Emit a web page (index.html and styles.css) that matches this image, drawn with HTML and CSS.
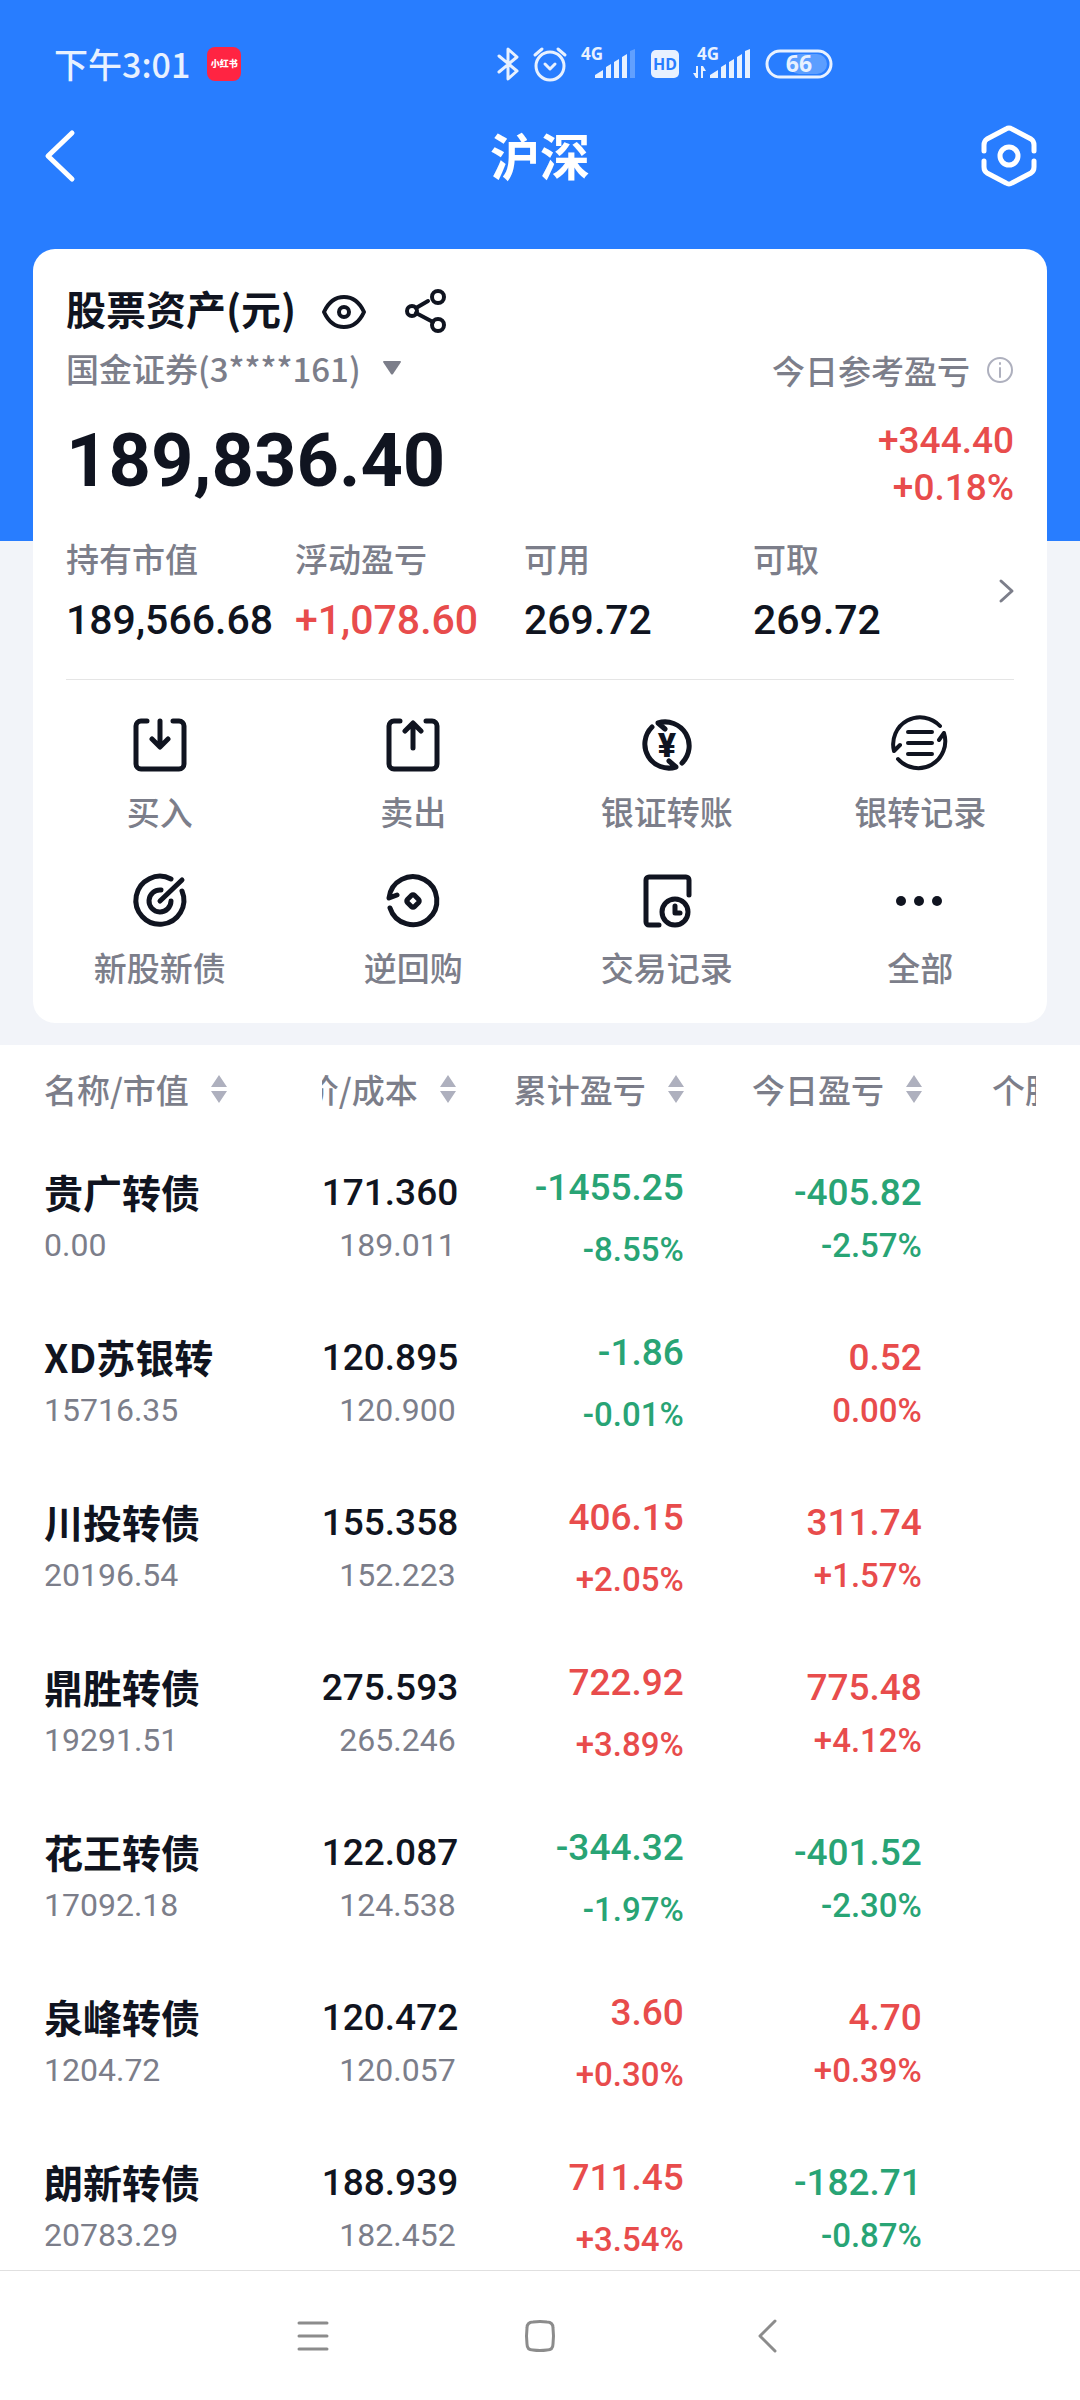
FILE: index.html
```html
<!DOCTYPE html>
<html lang="zh-CN">
<head>
    <meta charset="UTF-8">
    <meta name="viewport" content="width=device-width, initial-scale=1.0">
    <title>沪深</title>
    <link rel="stylesheet" href="styles.css">
</head>
<body>
    <div class="top">
        <div class="status-bar">
            <div class="status-left">
                <span>下午3:01</span>
                <span class="app-badge">小红书</span>
            </div>
            <div class="status-icons">
                <svg class="bluetooth" width="22" height="34" viewBox="0 0 22 34"><path d="M2 9l18 15-9 8V2l9 8L2 25"/></svg>
                <svg class="alarm" width="34" height="34" viewBox="0 0 34 34"><circle cx="17" cy="19" r="14"/><path d="M2 8l7-6M32 8l-7-6M12 17l5 5 5-5"/></svg>
                <svg class="signal" width="56" height="34" viewBox="0 0 56 34">
                    <text x="0" y="13">4G</text>
                    <path d="M14 31v-3l8-5v8zM25 31V20l5-3v14zM33 31V15l5-3v19zM41 31V10l5-3v24z"/>
                    <path class="dim" d="M49 31V4l5-2v29z"/>
                </svg>
                <svg class="hd" width="28" height="28" viewBox="0 0 28 28"><rect width="28" height="28" rx="5"/><text x="14" y="20">HD</text></svg>
                <svg class="signal" width="58" height="34" viewBox="0 0 58 34">
                    <text x="4" y="13">4G</text>
                    <path d="M3 19h2v12H3l-3-5h3zM8 31V19h2l3 5h-3v7z"/>
                    <path d="M17 31v-3l8-5v8zM28 31V20l5-3v14zM36 31V15l5-3v19zM44 31V10l5-3v24zM52 31V4l5-2v29z"/>
                </svg>
                <svg class="battery" width="68" height="30" viewBox="0 0 68 30"><rect class="level" x="24" y="5" width="38" height="20" rx="10"/><rect class="shell" x="2" y="2" width="64" height="26" rx="13"/><text x="34" y="23">66</text></svg>
            </div>
        </div>

        <header class="title-bar">
            <button type="button" aria-label="返回">
                <svg width="32" height="52" viewBox="0 0 32 52"><path d="M29 3L5 26l24 23"/></svg>
            </button>
            <h1>沪深</h1>
            <button type="button" aria-label="设置">
                <svg width="56" height="62" viewBox="0 0 56 62"><path d="M3 26v-6q0-4 3-6L25 4q3-2 6 0l19 10q3 2 3 6v6M3 36v6q0 4 3 6l19 10q3 2 6 0l19-10q3-2 3-6v-6"/><circle cx="28" cy="31" r="9"/></svg>
            </button>
        </header>

        <section class="card">
            <div class="card-title">
                <h2>股票资产(元)</h2>
                <button type="button" aria-label="隐藏金额">
                    <svg width="44" height="44" viewBox="0 0 44 44"><path d="M2 24C7 13 15 9 22 9s15 4 20 15c-5 11-13 15-20 15S7 35 2 24z"/><circle cx="22" cy="24" r="5"/></svg>
                </button>
                <button type="button" aria-label="分享">
                    <svg width="44" height="46" viewBox="0 0 44 46"><circle cx="34" cy="10" r="6"/><circle cx="8" cy="24" r="5"/><circle cx="34" cy="38" r="6"/><path d="M12 21l12-7M12 26l17 9"/></svg>
                </button>
            </div>

            <div class="account">
                <button type="button">国金证券(3****161)
                    <svg width="18" height="14" viewBox="0 0 18 14"><path d="M1 0h16q1 0 1 1l-8 12q-1 1-2 0L0 1q0-1 1-1z"/></svg>
                </button>
                <span class="today">今日参考盈亏
                    <svg width="28" height="28" viewBox="0 0 28 28"><circle cx="14" cy="14" r="12"/><path d="M14 12v9M14 7v1"/></svg>
                </span>
            </div>

            <div class="amount">
                <strong>189,836.40</strong>
                <div class="amount-change up">
                    <span>+344.40</span>
                    <span>+0.18%</span>
                </div>
            </div>

            <a class="metrics" href="#assets">
                <span class="metric"><span>持有市值</span><b>189,566.68</b></span>
                <span class="metric"><span>浮动盈亏</span><b class="up">+1,078.60</b></span>
                <span class="metric"><span>可用</span><b>269.72</b></span>
                <span class="metric"><span>可取</span><b>269.72</b></span>
                <svg width="16" height="24" viewBox="0 0 16 24"><path d="M3 2l11 10L3 22"/></svg>
            </a>

            <nav class="actions">
                <a href="#buy">
                    <svg width="54" height="56" viewBox="0 0 54 54"><path d="M14 3H8a5 5 0 0 0-5 5v38a5 5 0 0 0 5 5h38a5 5 0 0 0 5-5V8a5 5 0 0 0-5-5h-6M27 3v25M19 21l8 8 8-8"/></svg>
                    买入
                </a>
                <a href="#sell">
                    <svg width="54" height="56" viewBox="0 0 54 54"><path d="M14 3H8a5 5 0 0 0-5 5v38a5 5 0 0 0 5 5h38a5 5 0 0 0 5-5V8a5 5 0 0 0-5-5h-6M27 30V6M19 13l8-8 8 8"/></svg>
                    卖出
                </a>
                <a href="#transfer">
                    <svg width="54" height="56" viewBox="0 0 54 54"><path d="M12 9A24 24 0 0 0 36 49l-7-6M42 45A24 24 0 0 0 18 5l7 6"/><text x="27" y="39">¥</text></svg>
                    银证转账
                </a>
                <a href="#transfer-log">
                    <svg class="thin" width="60" height="60" viewBox="0 0 60 60"><path d="M50 13A27 27 0 0 0 4 38l6-6M8 46a27 27 0 0 0 46-26l-5 7M18 19h24M18 30h24M18 41h24"/></svg>
                    银转记录
                </a>
                <a href="#ipo">
                    <svg width="54" height="56" viewBox="0 0 54 54"><path d="M38 5A24 24 0 1 0 49 17M28 16a11 11 0 1 0 10 11M27 27L49 6"/></svg>
                    新股新债
                </a>
                <a href="#repo">
                    <svg width="54" height="56" viewBox="0 0 54 54"><path d="M11 21l-8 3A24 24 0 1 1 4 34"/><rect x="22" y="22" width="10" height="10" rx="2" transform="rotate(45 27 27)"/></svg>
                    逆回购
                </a>
                <a href="#trades">
                    <svg width="54" height="56" viewBox="0 0 54 54"><path d="M19 51H9a3 3 0 0 1-3-3V6a3 3 0 0 1 3-3h37a3 3 0 0 1 3 3v15"/><circle cx="35" cy="38" r="13"/><path d="M35 32v7h5"/></svg>
                    交易记录
                </a>
                <a href="#all">
                    <svg class="dots" width="54" height="56" viewBox="0 0 54 54"><circle cx="8" cy="27" r="5"/><circle cx="26" cy="27" r="5"/><circle cx="44" cy="27" r="5"/></svg>
                    全部
                </a>
            </nav>
        </section>
    </div>

    <main class="holdings">
        <table>
            <thead>
                <tr>
                    <th class="col-name"><button type="button">名称/市值 <svg width="16" height="28" viewBox="0 0 16 28"><path d="M8 0l8 12H0zM0 16h16L8 28z"/></svg></button></th>
                    <th class="col-price"><button type="button">现价/成本 <svg width="16" height="28" viewBox="0 0 16 28"><path d="M8 0l8 12H0zM0 16h16L8 28z"/></svg></button></th>
                    <th class="col-total"><button type="button">累计盈亏 <svg width="16" height="28" viewBox="0 0 16 28"><path d="M8 0l8 12H0zM0 16h16L8 28z"/></svg></button></th>
                    <th class="col-today"><button type="button">今日盈亏 <svg width="16" height="28" viewBox="0 0 16 28"><path d="M8 0l8 12H0zM0 16h16L8 28z"/></svg></button></th>
                    <th class="col-more"><button type="button">个股</button></th>
                </tr>
            </thead>
            <tbody>
                <tr>
                    <td class="name"><b>贵广转债</b><span>0.00</span></td>
                    <td class="price"><b>171.360</b><span>189.011</span></td>
                    <td class="total down"><b>-1455.25</b><span>-8.55%</span></td>
                    <td class="down"><b>-405.82</b><span>-2.57%</span></td>
                    <td></td>
                </tr>
                <tr>
                    <td class="name"><b>XD苏银转</b><span>15716.35</span></td>
                    <td class="price"><b>120.895</b><span>120.900</span></td>
                    <td class="total down"><b>-1.86</b><span>-0.01%</span></td>
                    <td class="up"><b>0.52</b><span>0.00%</span></td>
                    <td></td>
                </tr>
                <tr>
                    <td class="name"><b>川投转债</b><span>20196.54</span></td>
                    <td class="price"><b>155.358</b><span>152.223</span></td>
                    <td class="total up"><b>406.15</b><span>+2.05%</span></td>
                    <td class="up"><b>311.74</b><span>+1.57%</span></td>
                    <td></td>
                </tr>
                <tr>
                    <td class="name"><b>鼎胜转债</b><span>19291.51</span></td>
                    <td class="price"><b>275.593</b><span>265.246</span></td>
                    <td class="total up"><b>722.92</b><span>+3.89%</span></td>
                    <td class="up"><b>775.48</b><span>+4.12%</span></td>
                    <td></td>
                </tr>
                <tr>
                    <td class="name"><b>花王转债</b><span>17092.18</span></td>
                    <td class="price"><b>122.087</b><span>124.538</span></td>
                    <td class="total down"><b>-344.32</b><span>-1.97%</span></td>
                    <td class="down"><b>-401.52</b><span>-2.30%</span></td>
                    <td></td>
                </tr>
                <tr>
                    <td class="name"><b>泉峰转债</b><span>1204.72</span></td>
                    <td class="price"><b>120.472</b><span>120.057</span></td>
                    <td class="total up"><b>3.60</b><span>+0.30%</span></td>
                    <td class="up"><b>4.70</b><span>+0.39%</span></td>
                    <td></td>
                </tr>
                <tr>
                    <td class="name"><b>朗新转债</b><span>20783.29</span></td>
                    <td class="price"><b>188.939</b><span>182.452</span></td>
                    <td class="total up"><b>711.45</b><span>+3.54%</span></td>
                    <td class="down"><b>-182.71</b><span>-0.87%</span></td>
                    <td></td>
                </tr>
            </tbody>
        </table>
    </main>

    <nav class="system-nav">
        <button type="button" aria-label="最近任务"><svg width="32" height="34" viewBox="0 0 32 34"><path d="M2 4h28M2 17h28M2 30h28"/></svg></button>
        <button type="button" aria-label="主屏幕"><svg width="32" height="34" viewBox="0 0 32 34"><path d="M9 3q7-1 14 0 6 0 6 6 1 8 0 16 0 6-6 6-7 1-14 0-6 0-6-6-1-8 0-16 0-6 6-6z"/></svg></button>
        <button type="button" aria-label="返回"><svg width="20" height="34" viewBox="0 0 20 34"><path d="M18 2L3 17l15 15"/></svg></button>
    </nav>
</body>
</html>
```

FILE: styles.css
```css
* {
    box-sizing: border-box;
}
body {
    margin: 0;
    height: 100vh;
    display: flex;
    flex-direction: column;
    background: #fff;
    color: #101420;
    font-family: "Noto Sans CJK SC", sans-serif;
    font-size: 33px;
    line-height: 40px;
}
h1, h2 {
    margin: 0;
}
button {
    margin: 0;
    padding: 0;
    border: 0;
    background: none;
    color: inherit;
    font: inherit;
    white-space: nowrap;
    cursor: pointer;
}
a {
    color: inherit;
    text-decoration: none;
}
svg {
    display: block;
    flex: none;
    overflow: visible;
    fill: none;
    stroke: currentColor;
    stroke-linecap: round;
    stroke-linejoin: round;
}
.up {
    color: #e84c4c;
}
.down {
    color: #28a475;
}

/* blue area, the card hangs over its lower edge */
.top {
    flex: none;
    padding-bottom: 22px;
    background: linear-gradient(#287dff 541px, #f2f4f9 541px);
}
.status-bar {
    display: flex;
    align-items: center;
    height: 86px;
    padding-top: 42px;
    color: #e8f1ff;
    font-weight: 500;
}
.status-left {
    display: flex;
    align-items: center;
    gap: 17px;
    flex: 0 0 46%;
    padding-left: 54px;
    font-size: 34px;
}
.app-badge {
    width: 34px;
    height: 34px;
    border-radius: 8px;
    background: #ff2442;
    color: #fff;
    font-size: 9px;
    font-weight: 900;
    line-height: 34px;
    text-align: center;
}
.status-icons {
    display: flex;
    align-items: center;
    gap: 14px;
}
.status-icons svg {
    stroke-width: 3px;
}
.status-icons text {
    fill: currentColor;
    stroke: none;
    font-family: "Noto Sans", sans-serif;
    font-weight: 700;
}
.signal path {
    fill: currentColor;
    stroke: none;
}
.signal text {
    font-size: 17px;
}
.signal .dim {
    opacity: 0.3;
}
.hd rect {
    fill: currentColor;
    stroke: none;
}
.status-icons .hd text {
    fill: #287dff;
    font-size: 16px;
    text-anchor: middle;
}
.battery .level {
    fill: #5c9eff;
    stroke: none;
}
.battery text {
    font-size: 23px;
    text-anchor: middle;
}

.title-bar {
    display: flex;
    align-items: center;
    justify-content: space-between;
    height: 140px;
    margin-bottom: 23px;
    padding: 0 43px;
    color: #fff;
}
.title-bar h1 {
    padding: 0 0 4px 24px;
    font-size: 50px;
    line-height: 60px;
}
.title-bar svg {
    stroke-width: 5px;
}

.card {
    margin: 0 33px;
    padding: 38px 0 34px;
    border-radius: 22px;
    background: #fff;
}
.card-title {
    display: flex;
    align-items: center;
    gap: 38px;
    height: 46px;
    padding: 0 33px;
}
.card-title h2 {
    margin-right: -12px;
    padding-bottom: 4px;
    font-size: 40px;
    line-height: 46px;
}
.card-title svg {
    stroke-width: 4px;
}
.account {
    display: flex;
    align-items: flex-start;
    justify-content: space-between;
    margin-top: 17px;
    padding: 0 33px;
    color: #7c7e8a;
    font-weight: 500;
}
.account button {
    display: flex;
    align-items: center;
    gap: 22px;
    line-height: 36px;
}
.account button svg {
    fill: currentColor;
    stroke: none;
}
.today {
    display: flex;
    align-items: center;
    gap: 16px;
}
.today svg {
    color: #aeb0be;
    stroke-width: 2px;
}
.amount {
    display: flex;
    justify-content: space-between;
    margin-top: 27px;
    padding: 0 33px;
    font-family: Roboto, sans-serif;
}
.amount strong {
    font-size: 74px;
    line-height: 88px;
}
.amount-change {
    font-size: 37px;
    font-weight: 500;
    line-height: 47px;
    text-align: right;
}
.amount-change span {
    display: block;
}
.metrics {
    display: grid;
    grid-template-columns: repeat(4, 1fr) 32px;
    align-items: center;
    margin: 27px 33px 0;
    padding-bottom: 35px;
    border-bottom: 1px solid #e5e5e5;
}
.metric span {
    display: block;
    color: #7c7e8a;
    font-weight: 500;
}
.metric b {
    display: block;
    margin-top: 18px;
    font: 500 41px/48px Roboto, sans-serif;
}
.metrics svg {
    justify-self: end;
    color: #7c7e8a;
    stroke-width: 3px;
}
.actions {
    display: grid;
    grid-template-columns: repeat(4, 1fr);
    row-gap: 39px;
    padding-top: 36px;
}
.actions a {
    display: flex;
    flex-direction: column;
    align-items: center;
    justify-content: flex-end;
    gap: 18px;
    height: 117px;
    padding-bottom: 2px;
    color: #7c7e8a;
    font-weight: 500;
}
.actions svg {
    color: #101420;
    stroke-width: 5px;
}
.actions .thin {
    stroke-width: 4px;
}
.actions .dots {
    fill: currentColor;
    stroke: none;
}
.actions text {
    fill: currentColor;
    stroke: none;
    font: 900 34px Roboto, sans-serif;
    text-anchor: middle;
}

.holdings {
    flex: 1;
    min-height: 0;
    padding: 0 44px;
    overflow: hidden;
}
table {
    width: 100%;
    border-collapse: collapse;
    table-layout: fixed;
}
th, td {
    padding: 0;
    text-align: right;
}
th {
    height: 91px;
    padding-bottom: 4px;
    color: #7c7e8a;
    font-weight: 500;
    overflow: hidden;
}
th button {
    display: flex;
    align-items: center;
    justify-content: flex-end;
    gap: 22px;
    width: 100%;
}
th svg {
    fill: #aeb0be;
    stroke: none;
}
/* column shares in tenths of a percent of the table */
.col-name {
    width: 28%;
}
.col-price {
    width: 13.5%;
}
.col-total {
    width: 23%;
}
.col-today {
    width: 24%;
}
.col-name button, .col-more button {
    justify-content: flex-start;
}
.col-more {
    padding-left: 70px;
}
td {
    height: 165px;
    font-family: Roboto, "Noto Sans CJK SC", sans-serif;
}
td b {
    display: block;
    font-size: 37px;
    font-weight: 500;
    line-height: 53px;
}
td span {
    display: block;
    font-size: 32px;
    line-height: 53px;
}
.up span, .down span {
    font-size: 33px;
    font-weight: 500;
}
.amount-change.up span {
    font-size: 37px;
}
.name {
    text-align: left;
}
.name b {
    padding-bottom: 3px;
    font-family: "Noto Sans CJK SC", sans-serif;
    font-size: 39px;
    font-weight: 700;
    line-height: 50px;
}
.name span, .price span {
    color: #7c7e8a;
}
.total b, .total span {
    line-height: 62px;
}

.system-nav {
    flex: none;
    display: grid;
    grid-template-columns: repeat(3, 21%);
    justify-content: center;
    height: 130px;
    border-top: 1px solid #e0e0e0;
    background: #fff;
    color: #8c8c8c;
}
.system-nav button {
    display: flex;
    align-items: center;
    justify-content: center;
}
.system-nav svg {
    stroke-width: 3px;
}
```
